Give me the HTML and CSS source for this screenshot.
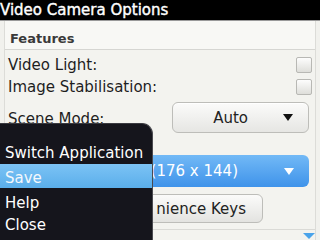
FILE: index.html
```html
<!DOCTYPE html>
<html>
<head>
<meta charset="utf-8">
<link rel="stylesheet" href="styles.css">
</head>
<body>
<div class="screen">
  <div class="title">Video Camera Options</div>
  <div class="panel">
    <div class="header">Features</div>
    <div class="row check-row first-check">
      <span class="label">Video Light:</span>
      <span class="checkbox"></span>
    </div>
    <div class="row check-row">
      <span class="label">Image Stabilisation:</span>
      <span class="checkbox"></span>
    </div>
    <div class="row scene-row">
      <span class="label">Scene Mode:</span>
      <div class="choice">
        <span class="choice-text">Auto</span>
        <span class="arrow"></span>
      </div>
    </div>
    <div class="row format-label"></div>
    <div class="blue-choice">
      <span class="blue-text">(176 x 144)</span>
      <span class="arrow white"></span>
    </div>
    <div class="btn-row">
      <div class="btn">nience Keys</div>
    </div>
    <div class="bottom-line"></div>
  </div>
  <div class="scroll-down"></div>
  <div class="menu">
    <div class="item first">Switch Application</div>
    <div class="item sel">Save</div>
    <div class="item third">Help</div>
    <div class="item">Close</div>
  </div>
</div>
</body>
</html>
```
FILE: styles.css
```css
html, body {
  margin: 0;
  padding: 0;
}
body {
  width: 320px;
  height: 240px;
  overflow: hidden;
  background: #f1f1ed;
  font-family: "DejaVu Sans", "Noto Sans", sans-serif;
}
.screen {
  position: relative;
  width: 320px;
  height: 240px;
  overflow: hidden;
}
.title {
  height: 20px;
  line-height: 20px;
  background: #000;
  color: #fff;
  font-size: 15px;
  padding-left: 0;
  border-bottom: 1px solid #9a9a9a;
  -webkit-text-stroke: 0.4px #fff;
}
.panel {
  margin: 0 4px;
  border-left: 1px solid #dcdcd8;
  border-right: 1px solid #dcdcd8;
  height: 219px;
  background: #f3f3ef;
}
.header {
  height: 29px;
  box-sizing: border-box;
  padding-top: 3px;
  line-height: 30px;
  padding-left: 5px;
  font-size: 13px;
  font-weight: bold;
  color: #3a3a3a;
  background: #f8f8f5;
  border-bottom: 1px solid #d6d6d2;
}
.row {
  display: flex;
  align-items: center;
  justify-content: space-between;
  padding-left: 3px;
  font-size: 15px;
  color: #1e1e1e;
}
.check-row {
  height: 22px;
}
.first-check {
  margin-top: 4px;
}
.checkbox {
  width: 14px;
  height: 14px;
  border: 1px solid #b8b8b4;
  border-radius: 2px;
  background: linear-gradient(#fdfdfd, #dededa);
  margin-right: 3px;
}
.scene-row {
  height: 31px;
  margin-top: 4px;
}
.scene-row .label {
  padding-top: 2px;
}
.choice {
  width: 135px;
  height: 29px;
  border: 1px solid #bdbdb9;
  border-radius: 6px;
  background: linear-gradient(#fbfbfa, #e6e6e3);
  margin-right: 6px;
  display: flex;
  align-items: center;
  box-shadow: 0 1px 0 #fff inset;
}
.choice-text {
  flex: 1;
  text-align: right;
  padding-right: 35px;
  font-size: 15px;
  color: #222;
}
.arrow {
  width: 0;
  height: 0;
  border-left: 5px solid transparent;
  border-right: 5px solid transparent;
  border-top: 7px solid #111;
  margin-right: 15px;
}
.arrow.white {
  border-top-color: #fff;
}
.format-label {
  height: 22px;
}
.blue-choice {
  margin: 0 6px 0 3px;
  height: 32px;
  border-radius: 6px;
  background: linear-gradient(#72b9f6, #3f93ea);
  display: flex;
  align-items: center;
  color: #fff;
  font-size: 15px;
}
.blue-text {
  flex: 1;
  text-align: right;
  padding-right: 46px;
}
.btn-row {
  display: flex;
  justify-content: flex-end;
  margin-top: 7px;
  padding-right: 52px;
}
.btn {
  height: 29px;
  line-height: 29px;
  width: 255px;
  box-sizing: border-box;
  text-align: right;
  white-space: nowrap;
  padding: 0 16px 0 0;
  border: 1px solid #bdbdb9;
  border-radius: 6px;
  background: linear-gradient(#fbfbfa, #e3e3e0);
  font-size: 15px;
  color: #222;
}
.bottom-line {
  margin-top: 6px;
  border-top: 1px solid #dadad6;
}
.scroll-down {
  position: absolute;
  left: 303px;
  top: 233px;
  width: 0;
  height: 0;
  border-left: 6px solid transparent;
  border-right: 6px solid transparent;
  border-top: 6px solid #4aa3ea;
}
.menu {
  position: absolute;
  left: 0;
  top: 123px;
  width: 153px;
  height: 117px;
  box-sizing: border-box;
  padding-top: 17px;
  background: #15151c;
  border-top-right-radius: 11px;
  border-right: 1px solid #4a4a50;
  border-top: 1px solid #3a3a40;
  color: #fff;
  font-size: 15px;
}
.item {
  height: 22px;
  line-height: 22px;
  padding-left: 5px;
}
.item.first {
  height: 23px;
  line-height: 24px;
}
.item.sel {
  height: 24px;
  line-height: 28px;
  background: linear-gradient(#7cc3f5, #5aaeea);
  color: #f4f8fc;
}
.item.third {
  margin-top: 4px;
}
```
